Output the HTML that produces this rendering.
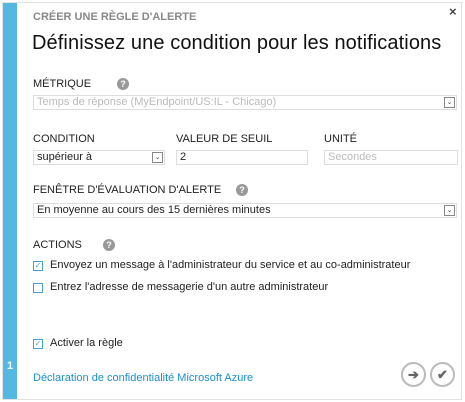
<!DOCTYPE html><html><head><meta charset="utf-8"><style>
body{margin:0;width:465px;height:402px;background:#fff;font-family:"Liberation Sans",sans-serif;position:relative;overflow:hidden}
.a{position:absolute;white-space:nowrap}
.frame{position:absolute;left:2px;top:2px;width:458px;height:396px;border:1px solid #e2e2e2}
.side{position:absolute;left:3px;top:3px;width:14px;height:396px;background:#55b8e2}
.lbl{font-size:11px;color:#222}
.sel{position:absolute;height:13px;border:1px solid #ddd;font-size:11px;line-height:13px;padding-left:3px;color:#222;box-sizing:content-box}
.dd{position:absolute;right:1px;top:1px;width:9px;height:9px;border:1px solid #888;font-size:7px;line-height:9px;text-align:center;color:#444}
.help{position:absolute;width:12px;height:12px;border-radius:50%;background:#999;color:#fff;font-size:9px;font-weight:bold;text-align:center;line-height:12px}
.cb{position:absolute;width:8px;height:8px;border:1px solid #4a9fd0;font-size:8px;line-height:8px;color:#4a9fd0;text-align:center}
.circ{position:absolute;width:21px;height:21px;border:2px solid #bbb;border-radius:50%;color:#666;text-align:center;line-height:21px;font-size:13px;font-weight:bold}
</style></head><body>
<div class="frame"></div><div class="side"></div>
<div class="a" style="left:449px;top:4px;font-size:13px;color:#444;font-weight:bold">×</div>
<div class="a" style="left:33px;top:11px;font-size:11px;font-weight:bold;color:#888">CRÉER UNE RÈGLE D'ALERTE</div>
<div class="a" style="left:32px;top:32px;font-size:20px;color:#111;letter-spacing:0.1px">Définissez une condition pour les notifications</div>
<div class="a lbl" style="left:33px;top:78px">MÉTRIQUE</div><div class="help" style="left:117px;top:78px">?</div>
<div class="sel" style="left:33px;top:95px;width:419px;color:#bbb">Temps de réponse (MyEndpoint/US:IL - Chicago)<div class="dd">⌄</div></div>
<div class="a lbl" style="left:33px;top:133px">CONDITION</div>
<div class="a lbl" style="left:176px;top:133px">VALEUR DE SEUIL</div>
<div class="a lbl" style="left:324px;top:133px">UNITÉ</div>
<div class="sel" style="left:33px;top:150px;width:127px">supérieur à<div class="dd">⌄</div></div>
<div class="sel" style="left:176px;top:150px;width:127px">2</div>
<div class="sel" style="left:324px;top:150px;width:129px;color:#bbb">Secondes</div>
<div class="a lbl" style="left:33px;top:184px">FENÊTRE D'ÉVALUATION D'ALERTE</div><div class="help" style="left:236px;top:184px">?</div>
<div class="sel" style="left:33px;top:203px;width:419px">En moyenne au cours des 15 dernières minutes<div class="dd">⌄</div></div>
<div class="a lbl" style="left:33px;top:239px">ACTIONS</div><div class="help" style="left:103px;top:239px">?</div>
<div class="cb" style="left:33px;top:261px">✓</div><div class="a lbl" style="left:50px;top:259px">Envoyez un message à l'administrateur du service et au co-administrateur</div>
<div class="cb" style="left:33px;top:283px"></div><div class="a lbl" style="left:50px;top:281px">Entrez l'adresse de messagerie d'un autre administrateur</div>
<div class="cb" style="left:33px;top:339px">✓</div><div class="a lbl" style="left:50px;top:337px">Activer la règle</div>
<div class="a" style="left:7px;top:360px;font-size:11px;color:#fff;font-weight:bold">1</div>
<div class="a" style="left:33px;top:372px;font-size:11px;color:#1a8fd0">Déclaration de confidentialité Microsoft Azure</div>
<div class="circ" style="left:401px;top:362px">➔</div>
<div class="circ" style="left:430px;top:362px">✔</div>
</body></html>
